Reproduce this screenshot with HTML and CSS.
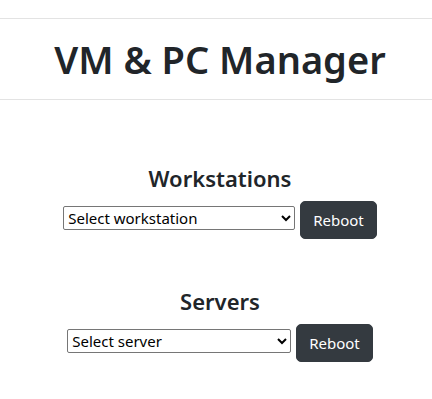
FILE: index.html
```html
<!DOCTYPE html>
<html lang="en">
<head>
    <meta charset="UTF-8">
    <meta name="viewport" content="width=device-width, initial-scale=1.0">
    <title>VM &amp; PC Manager</title>
    <link rel="stylesheet" href="styles.css">
</head>
<body>
    <header class="page-header">
        <h1>VM &amp; PC Manager</h1>
    </header>

    <main class="content">
        <section class="group">
            <h3>Workstations</h3>
            <div class="control-row">
                <select id="workstationSelect" class="ws-select">
                    <option>Select workstation</option>
                </select>
                <button class="btn-dark">Reboot</button>
            </div>
        </section>

        <section class="group">
            <h3>Servers</h3>
            <div class="control-row">
                <select id="serverSelect" class="srv-select">
                    <option>Select server</option>
                </select>
                <button class="btn-dark">Reboot</button>
            </div>
        </section>
    </main>
</body>
</html>
```

FILE: styles.css
```css
* {
    box-sizing: border-box;
}

body {
    margin: 0;
    font-family: "Noto Sans", "Open Sans", sans-serif;
    color: #212529;
    background: #fff;
}

.page-header {
    margin-top: 18px;
    padding: 16px 0 16px 8px;
    border-top: 1px solid #e3e3e3;
    border-bottom: 1px solid #e3e3e3;
    text-align: center;
}

h1 {
    margin: 0;
    font-size: 38px;
    font-weight: 600;
    line-height: 48px;
}

.content {
    padding: 64px 0 0 8px;
}

.group {
    display: flex;
    flex-direction: column;
    align-items: center;
    margin-bottom: 48px;
}

h3 {
    margin: 0 0 8px;
    font-size: 22px;
    font-weight: 600;
    line-height: 29px;
}

.control-row {
    display: flex;
    align-items: flex-start;
    gap: 5px;
}

select {
    margin-top: 5px;
    height: 24px;
    font-family: inherit;
    font-size: 15px;
    color: #000;
    border: 1px solid #767676;
    border-radius: 2px;
    background: #fff;
}

.ws-select {
    width: 232px;
}

.srv-select {
    width: 224px;
}

.btn-dark {
    padding: 6px 12px;
    font-family: inherit;
    font-size: 15px;
    line-height: 24px;
    color: #fff;
    background: #343a40;
    border: 1px solid #343a40;
    border-radius: 5px;
    cursor: pointer;
}

.btn-dark:hover {
    background: #23272b;
}
```
